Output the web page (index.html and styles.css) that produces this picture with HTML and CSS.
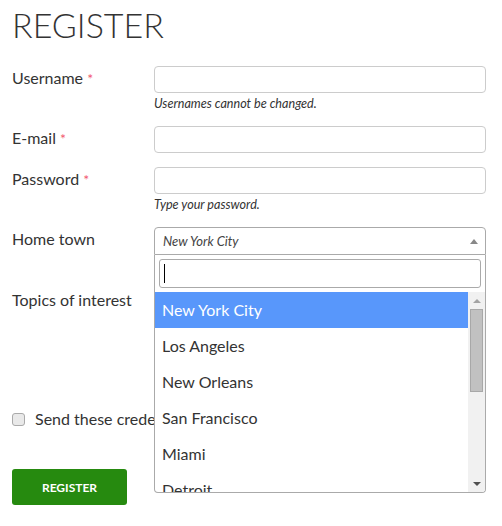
FILE: index.html
```html
<!DOCTYPE html>
<html lang="en">
<head>
    <meta charset="UTF-8">
    <meta name="viewport" content="width=device-width, initial-scale=1.0">
    <title>Register</title>
    <link rel="stylesheet" href="styles.css">
</head>
<body>

    <div class="page">
        <h1>Register</h1>

        <form class="register-form">
            <div class="field">
                <label for="username">Username <span class="req">*</span></label>
                <div class="control">
                    <input type="text" id="username">
                    <p class="help">Usernames cannot be changed.</p>
                </div>
            </div>

            <div class="field">
                <label for="email">E-mail <span class="req">*</span></label>
                <div class="control">
                    <input type="text" id="email">
                </div>
            </div>

            <div class="field">
                <label for="password">Password <span class="req">*</span></label>
                <div class="control">
                    <input type="password" id="password">
                    <p class="help">Type your password.</p>
                </div>
            </div>

            <div class="field field-town">
                <label>Home town</label>
                <div class="control">
                    <div class="select-wrap">
                        <div class="select open">
                            <span class="select-value">New York City</span>
                            <span class="select-arrow"></span>
                        </div>

                        <!-- open dropdown -->
                        <div class="dropdown">
                            <div class="dropdown-search">
                                <div class="search-box"><span class="caret"></span></div>
                            </div>
                            <div class="dropdown-list">
                                <ul class="options">
                                    <li class="active">New York City</li>
                                    <li>Los Angeles</li>
                                    <li>New Orleans</li>
                                    <li>San Francisco</li>
                                    <li>Miami</li>
                                    <li>Detroit</li>
                                    <li>Chicago</li>
                                </ul>
                                <div class="scrollbar">
                                    <span class="scroll-btn up"></span>
                                    <div class="scroll-track">
                                        <div class="scroll-thumb"></div>
                                    </div>
                                    <span class="scroll-btn down"></span>
                                </div>
                            </div>
                        </div>
                    </div>
                </div>
            </div>

            <div class="field field-topics">
                <label>Topics of interest</label>
                <div class="control">
                    <div class="topics-box"></div>
                </div>
            </div>

            <label class="check-row">
                <input type="checkbox" class="check">
                <span>Send these credentials via email.</span>
            </label>

            <button type="button" class="btn-register">Register</button>
        </form>
    </div>

</body>
</html>
```

FILE: styles.css
```css
/* General Styling */
body {
    margin: 0;
    font-family: 'Lato', 'Open Sans', sans-serif;
    color: #333;
    background: #fff;
}

.page {
    padding: 4px 12px;
}

h1 {
    margin: 0 0 21px;
    font-size: 34px;
    font-weight: 300;
    text-transform: uppercase;
    color: #333;
}

/* Form rows */
.field {
    display: grid;
    grid-template-columns: 142px 332px;
    margin-bottom: 14px;
}

.field > label {
    font-size: 16px;
    padding-top: 2px;
}

.req {
    color: #f2596f;
    font-size: 14px;
}

.control input[type="text"],
.control input[type="password"] {
    display: block;
    width: 100%;
    height: 27px;
    box-sizing: border-box;
    border: 1px solid #ccc;
    border-radius: 4px;
    font-family: inherit;
    font-size: 14px;
    padding: 0 8px;
    margin: 0;
}

.help {
    margin: 0;
    padding-top: 2px;
    font-size: 12.6px;
    font-style: italic;
    line-height: 17px;
}

/* Home town select */
.field-town {
    margin-bottom: 33px;
}

.select-wrap {
    position: relative;
}

.select {
    display: flex;
    align-items: center;
    justify-content: space-between;
    height: 28px;
    box-sizing: border-box;
    border: 1px solid #aaa;
    border-radius: 4px;
    padding: 0 7px 0 8px;
    font-size: 13px;
    font-style: italic;
    color: #444;
}

.select.open {
    border-bottom-left-radius: 0;
    border-bottom-right-radius: 0;
}

.select-arrow {
    width: 0;
    height: 0;
    border-style: solid;
    border-width: 0 4px 5px 4px;
    border-color: transparent transparent #888 transparent;
}

.dropdown {
    position: absolute;
    top: 100%;
    left: 0;
    right: 0;
    z-index: 10;
    background: #fff;
    border: 1px solid #aaa;
    border-top: none;
    border-radius: 0 0 4px 4px;
    overflow: hidden;
}

.dropdown-search {
    padding: 4px;
}

.search-box {
    height: 29px;
    box-sizing: border-box;
    border: 1px solid #aaa;
    border-radius: 3px;
    display: flex;
    align-items: center;
    padding-left: 4px;
}

.caret {
    width: 1px;
    height: 19px;
    background: #000;
}

.dropdown-list {
    display: flex;
    height: 200px;
}

.options {
    flex: 1;
    list-style: none;
    margin: 0;
    padding: 0;
    overflow: hidden;
}

.options li {
    height: 36px;
    line-height: 36px;
    padding: 0 7px;
    font-size: 16px;
    color: #333;
}

.options li.active {
    background: #5897fb;
    color: #fff;
}

/* fake scrollbar */
.scrollbar {
    width: 17px;
    background: #f1f1f1;
    display: flex;
    flex-direction: column;
}

.scroll-btn {
    height: 17px;
    display: flex;
    align-items: center;
    justify-content: center;
}

.scroll-btn::after {
    content: "";
    width: 0;
    height: 0;
    border-style: solid;
}

.scroll-btn.up::after {
    border-width: 0 4px 4px 4px;
    border-color: transparent transparent #a3a3a3 transparent;
}

.scroll-btn.down::after {
    border-width: 4px 4px 0 4px;
    border-color: #505050 transparent transparent transparent;
}

.scroll-track {
    flex: 1;
    padding: 0 2px;
}

.scroll-thumb {
    height: 83px;
    box-sizing: border-box;
    background: #c1c1c1;
    border: 1px solid #a8a8a8;
}

/* Topics */
.field-topics {
    margin-bottom: 0;
}

.topics-box {
    height: 121px;
}

/* Checkbox row */
.check-row {
    display: flex;
    align-items: center;
    gap: 10px;
    font-size: 16px;
    line-height: 20px;
    margin-bottom: 40px;
}

.check {
    appearance: none;
    -webkit-appearance: none;
    width: 13px;
    height: 13px;
    margin: 0;
    border: 1px solid #aaa;
    border-radius: 3px;
    background: #e9e9e9;
}

.btn-register {
    display: block;
    width: 115px;
    height: 36px;
    border: none;
    border-radius: 3px;
    background: #268a0f;
    color: #fff;
    font-family: inherit;
    font-size: 12px;
    font-weight: bold;
    text-transform: uppercase;
    cursor: pointer;
}
```
